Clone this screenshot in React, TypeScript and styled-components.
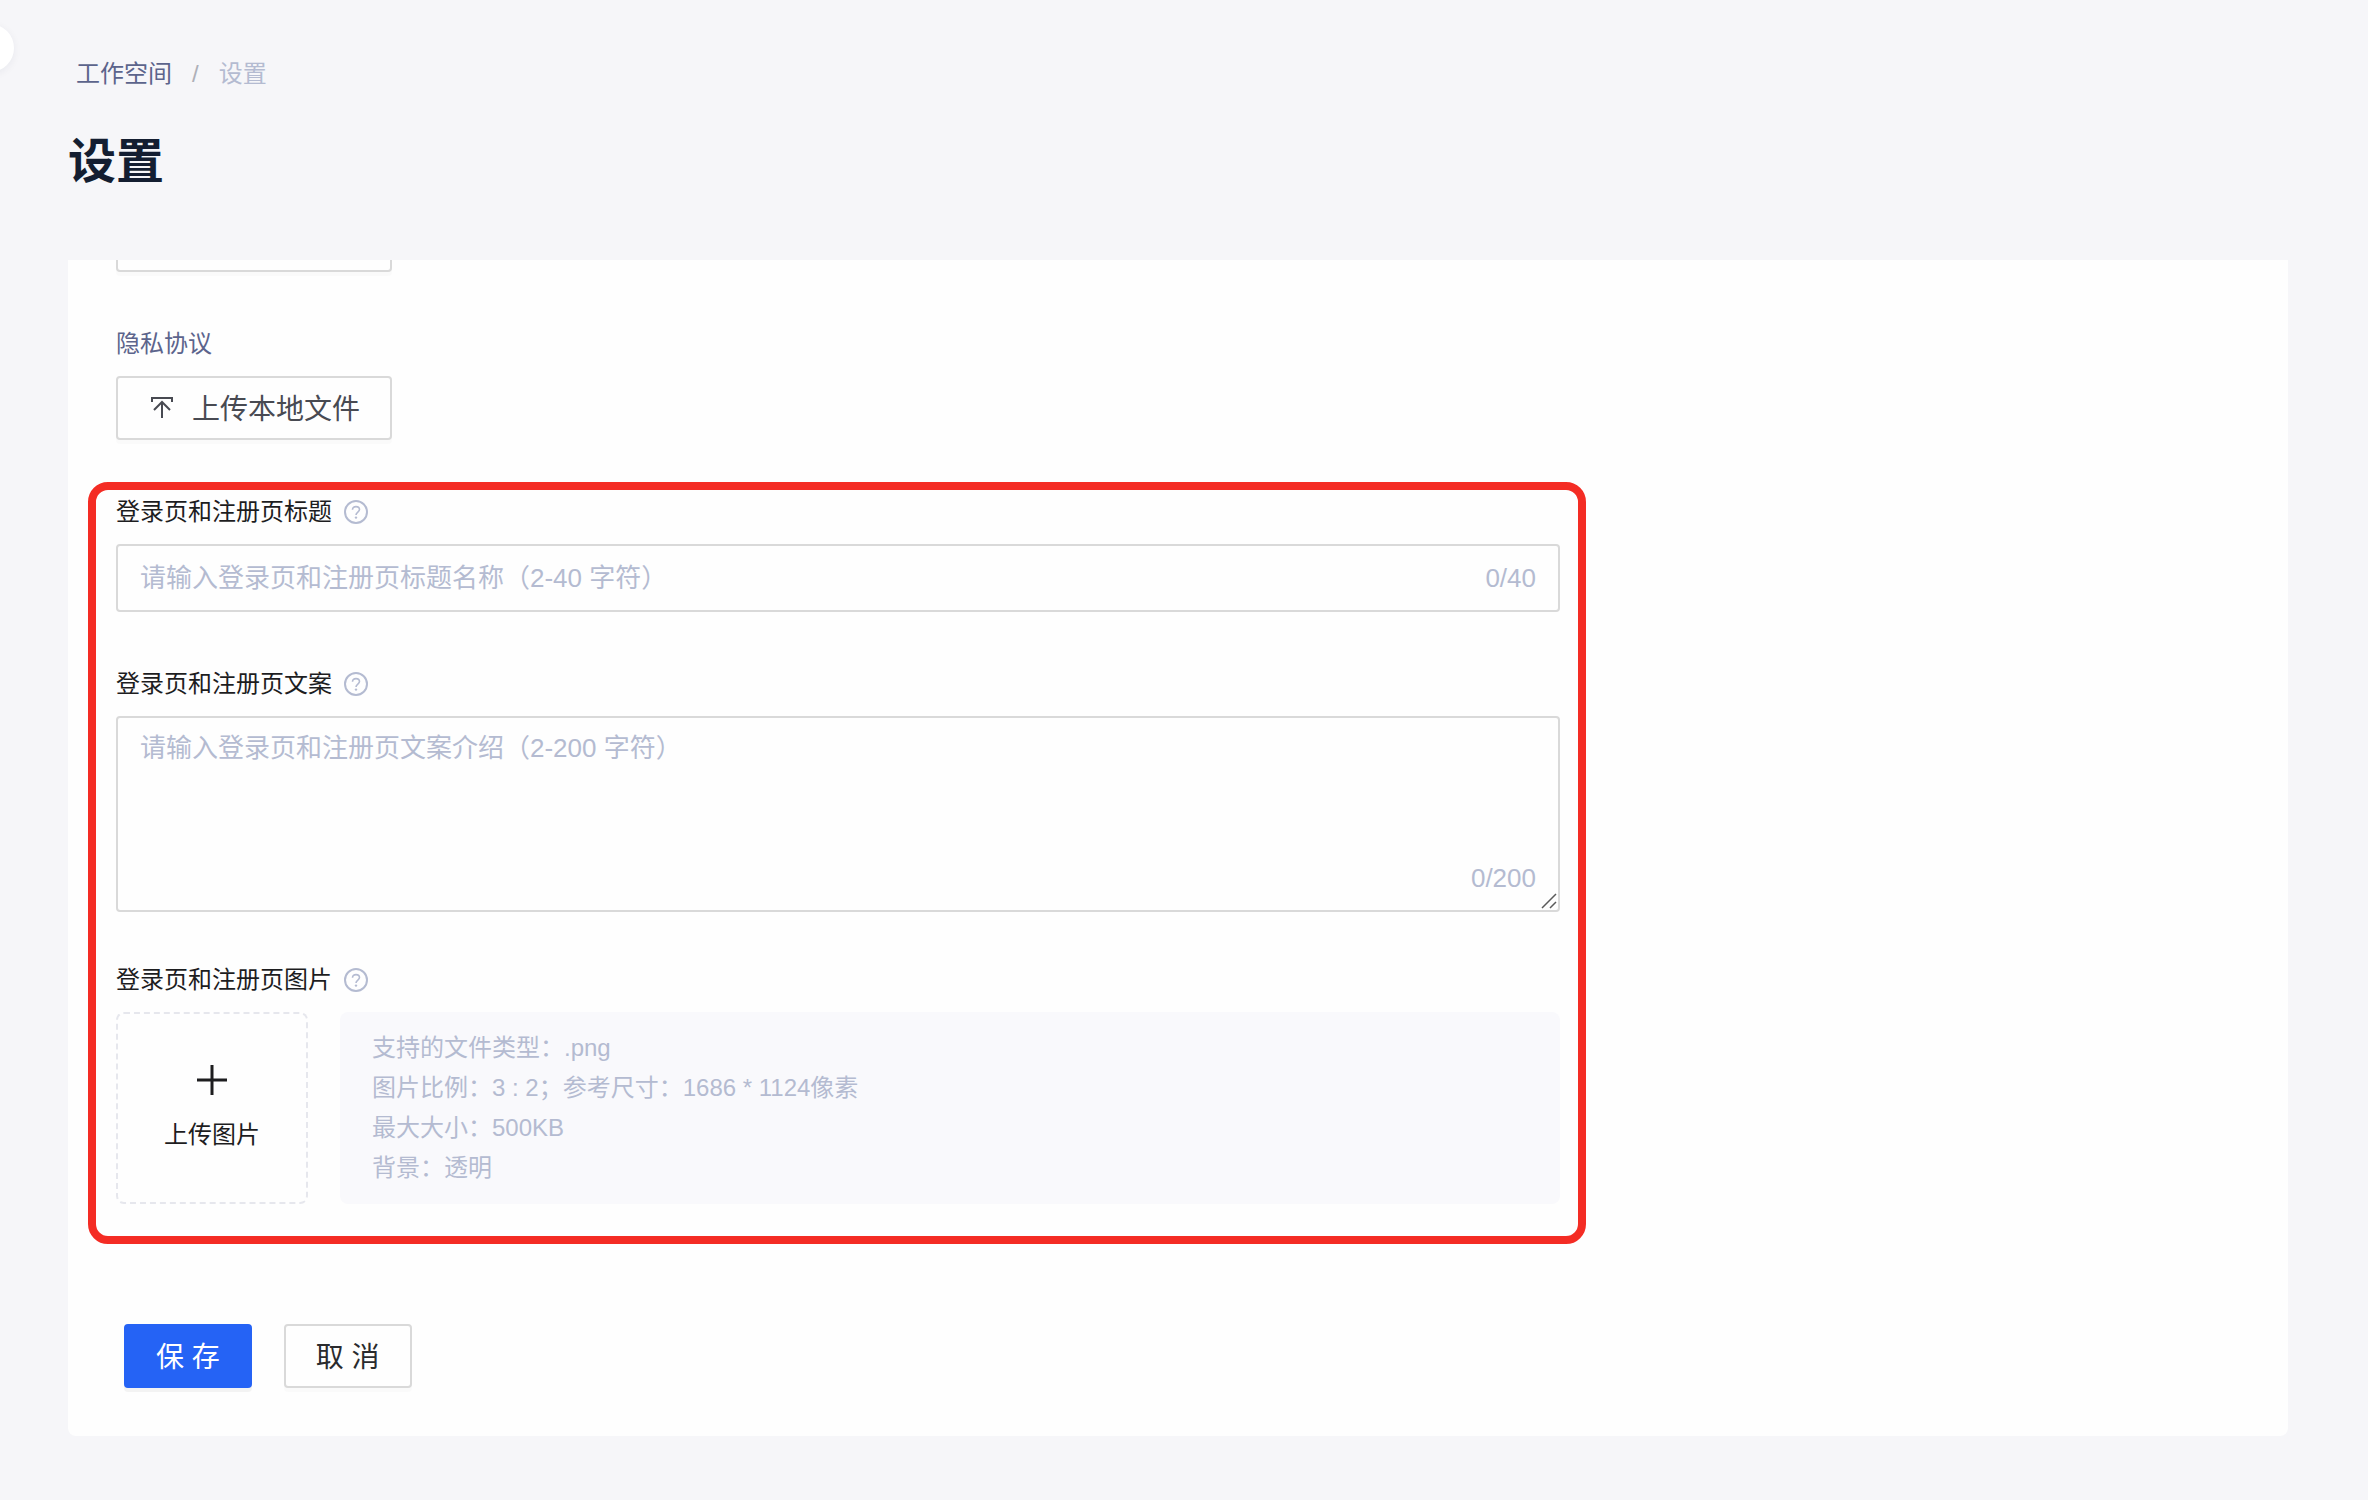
import React, { useState } from 'react';
import styled, { createGlobalStyle } from 'styled-components';

const GlobalStyle = createGlobalStyle`
  *, *::before, *::after { box-sizing: border-box; }
  body {
    margin: 0;
    background: #f6f6f9;
    font-family: 'Liberation Sans', 'Noto Sans CJK SC', sans-serif;
    color: #1d1d1f;
  }
  button, input, textarea { font: inherit; margin: 0; }
`;

const Page = styled.div`
  position: relative;
  display: flex;
  flex-direction: column;
  height: 100vh;
  padding: 54px 80px 64px 68px;
  overflow: hidden;
`;

const SidebarToggle = styled.button`
  position: absolute;
  left: -34px;
  top: 24px;
  width: 48px;
  height: 48px;
  padding: 0;
  border: 0;
  border-radius: 50%;
  background: #fff;
  box-shadow: 0 2px 8px rgba(20, 30, 60, 0.06);
`;

const Breadcrumb = styled.nav`
  display: flex;
  gap: 20px;
  padding-left: 8px;
  font-size: 24px;
  line-height: 40px;
  color: #b4bbd1;
`;

const CrumbLink = styled.a`
  color: #5c648c;
  text-decoration: none;
`;

const Slash = styled.span`
  color: #aeb0b8;
`;

const Title = styled.h1`
  margin: 36px 0 66px;
  font-size: 48px;
  line-height: 64px;
  font-weight: 700;
  color: #141e31;
`;

const Card = styled.main`
  flex: 1;
  display: flex;
  flex-direction: column;
  align-items: flex-start;
  justify-content: flex-end;
  min-height: 0;
  padding: 0 48px 48px;
  overflow: hidden;
  background: #fefefe;
  border-radius: 0 0 8px 8px;
`;

const Field = styled.div<{ $gap?: number }>`
  display: flex;
  flex-direction: column;
  align-items: flex-start;
  gap: 12px;
  margin-top: ${(p) => p.$gap ?? 0}px;
`;

const Label = styled.label<{ $muted?: boolean }>`
  display: flex;
  align-items: center;
  gap: 12px;
  font-size: 24px;
  line-height: 40px;
  color: ${(p) => (p.$muted ? '#5c648c' : '#1d1d1f')};
`;

const Button = styled.button<{ $primary?: boolean }>`
  display: flex;
  align-items: center;
  justify-content: center;
  gap: 16px;
  height: 64px;
  padding: 0 30px 2px;
  font-size: 28px;
  white-space: pre;
  color: ${(p) => (p.$primary ? '#fff' : '#2a2b2e')};
  background: ${(p) => (p.$primary ? '#2563f5' : '#fefefe')};
  border: 2px solid ${(p) => (p.$primary ? '#2563f5' : '#d9d9d9')};
  border-radius: 4px;
  box-shadow: 0 4px 0 rgba(0, 0, 0, ${(p) => (p.$primary ? 0.045 : 0.016)});
`;

const UploadFileButton = styled(Button)`
  min-width: 276px;
  flex-shrink: 0;
  color: #484a52;
`;

const Highlight = styled.section`
  width: calc(100% + 28px);
  max-width: 1498px;
  margin: 42px 0 80px -28px;
  padding: 2px 18px 32px 20px;
  border: 8px solid #f42c24;
  border-radius: 20px;
`;

const Control = styled.div`
  position: relative;
  display: flex;
  width: 100%;
`;

const TextInput = styled.input`
  width: 100%;
  height: 68px;
  padding: 0 120px 0 22px;
  font-size: 26px;
  color: #1d1d1f;
  background: #fefefe;
  border: 2px solid #d9d9d9;
  border-radius: 4px;
  outline: none;
  &::placeholder { color: #b4bbd1; opacity: 1; }
`;

const TextArea = styled.textarea`
  display: block;
  width: 100%;
  height: 196px;
  padding: 10px 22px;
  font-size: 26px;
  line-height: 40px;
  color: #1d1d1f;
  background: #fefefe;
  border: 2px solid #d9d9d9;
  border-radius: 4px;
  outline: none;
  resize: none;
  &::placeholder { color: #b4bbd1; opacity: 1; }
`;

const Count = styled.span`
  position: absolute;
  right: 24px;
  bottom: 14px;
  font-size: 26px;
  line-height: 40px;
  color: #b4bbd1;
  pointer-events: none;
`;

const Grip = styled.svg`
  position: absolute;
  right: 3px;
  bottom: 3px;
`;

const UploadRow = styled.div`
  display: flex;
  gap: 32px;
  width: 100%;
`;

const ImageUpload = styled.button`
  display: flex;
  flex-direction: column;
  align-items: center;
  justify-content: center;
  gap: 20px;
  flex: none;
  width: 192px;
  height: 192px;
  padding: 4px 0 0;
  font-size: 24px;
  line-height: 40px;
  color: #1d1d1f;
  background: transparent;
  border: 2px dashed #e6e7ed;
  border-radius: 8px;
`;

const Hints = styled.ul`
  flex: 1;
  margin: 0;
  padding: 16px 32px;
  list-style: none;
  font-size: 24px;
  line-height: 40px;
  color: #b4bbd1;
  background: #f9f9fc;
  border-radius: 8px;
`;

const Actions = styled.div`
  display: flex;
  gap: 32px;
  padding-left: 8px;
`;

const HelpIcon = () => (
  <svg width="24" height="24" viewBox="0 0 24 24" fill="none" stroke="#b4bbd1" strokeWidth="2" aria-hidden="true">
    <circle cx="12" cy="12" r="11" />
    <path d="M8.500 9.800C8.500 7.800 10 6.600 12 6.600s3.500 1.200 3.500 3c0 2.400-3.500 2.600-3.500 5.400" strokeWidth="1.600" />
    <circle cx="12" cy="17.600" r="1.200" fill="#b4bbd1" stroke="none" />
  </svg>
);

const UploadIcon = () => (
  <svg width="28" height="28" viewBox="0 0 28 28" fill="none" stroke="#484a52" strokeWidth="2" aria-hidden="true">
    <path d="M4 9V5h20v4M14 9v16M6 17l8-8 8 8" />
  </svg>
);

const PlusIcon = () => (
  <svg width="30" height="30" viewBox="0 0 30 30" stroke="#1d1d1f" strokeWidth="3" aria-hidden="true">
    <path d="M15 0v30M0 15h30" />
  </svg>
);

const hints = [
  '支持的文件类型：.png',
  '图片比例：3 : 2；参考尺寸：1686 * 1124像素',
  '最大大小：500KB',
  '背景：透明',
];

export default function App() {
  const [title, setTitle] = useState('');
  const [copy, setCopy] = useState('');

  return (
    <Page lang="zh-CN">
      <GlobalStyle />
      <SidebarToggle type="button" />
      <Breadcrumb>
        <CrumbLink href="#workspace">工作空间</CrumbLink>
        <Slash>/</Slash>
        <span>设置</span>
      </Breadcrumb>
      <Title>设置</Title>

      <Card>
        <UploadFileButton type="button" />
        <Field $gap={52}>
          <Label $muted htmlFor="privacy">隐私协议</Label>
          <UploadFileButton type="button" id="privacy">
            <UploadIcon />
            上传本地文件
          </UploadFileButton>
        </Field>

        <Highlight>
          <Field>
            <Label htmlFor="page-title">登录页和注册页标题<HelpIcon /></Label>
            <Control>
              <TextInput
                id="page-title"
                maxLength={40}
                value={title}
                onChange={(e) => setTitle(e.target.value)}
                placeholder="请输入登录页和注册页标题名称（2-40 字符）"
              />
              <Count>{title.length}/40</Count>
            </Control>
          </Field>

          <Field $gap={52}>
            <Label htmlFor="page-copy">登录页和注册页文案<HelpIcon /></Label>
            <Control>
              <TextArea
                id="page-copy"
                maxLength={200}
                value={copy}
                onChange={(e) => setCopy(e.target.value)}
                placeholder="请输入登录页和注册页文案介绍（2-200 字符）"
              />
              <Count>{copy.length}/200</Count>
              <Grip width="16" height="16" viewBox="0 0 16 16" stroke="#5a5a5a" strokeWidth="1.500" aria-hidden="true">
                <path d="M1 15L15 1M9 15l6-6" />
              </Grip>
            </Control>
          </Field>

          <Field $gap={48}>
            <Label htmlFor="page-image">登录页和注册页图片<HelpIcon /></Label>
            <UploadRow>
              <ImageUpload type="button" id="page-image">
                <PlusIcon />
                上传图片
              </ImageUpload>
              <Hints>
                {hints.map((h) => (
                  <li key={h}>{h}</li>
                ))}
              </Hints>
            </UploadRow>
          </Field>
        </Highlight>

        <Actions>
          <Button type="submit" $primary>保 存</Button>
          <Button type="button">取 消</Button>
        </Actions>
      </Card>
    </Page>
  );
}
